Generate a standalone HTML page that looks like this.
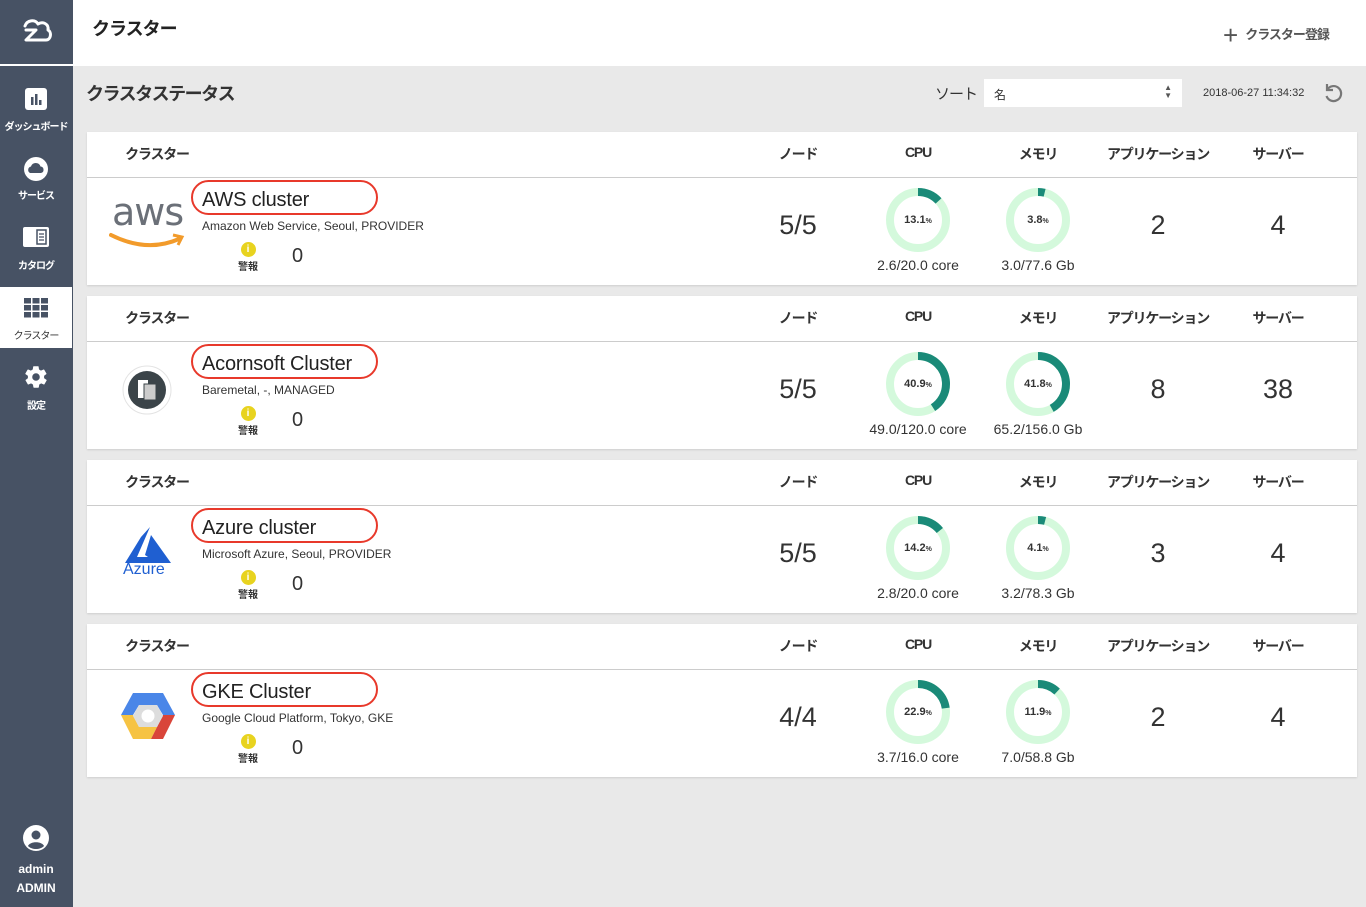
<!DOCTYPE html>
<html><head><meta charset="utf-8"><style>
*{margin:0;padding:0;box-sizing:border-box}
body{width:1366px;height:907px;background:#e9e9e9;font-family:"Liberation Sans","Noto Sans CJK JP",sans-serif;color:#333;position:relative;overflow:hidden}
.side{position:absolute;left:0;top:0;width:73px;height:907px;background:#475264;color:#fff}
.side .logo{height:66px;border-bottom:2px solid #fff;display:flex;align-items:center;justify-content:center}
.nav{position:absolute;left:0;width:72px;height:62px;text-align:center;font-size:10px;font-weight:bold;color:#fff;letter-spacing:-1px}
.nav svg{display:block;margin:0 auto}
.nav.act{background:#fff;color:#333;font-weight:normal}
.top{position:absolute;left:73px;top:0;right:0;height:66px;background:#fff}
.abs{position:absolute;white-space:nowrap}
.card{position:absolute;left:87px;width:1270px;height:153px;background:#fff;box-shadow:0 1px 2px rgba(0,0,0,.12)}
.card .hl{position:absolute;left:0;right:0;top:45px;border-top:1px solid #ccc}
.h{position:absolute;top:12px;font-size:14px;font-weight:bold;transform:translateX(-50%);letter-spacing:-1.2px;white-space:nowrap}
.big{position:absolute;top:78px;font-size:27px;transform:translateX(-50%);color:#333}
.name{position:absolute;left:104px;top:48px;width:187px;height:35px;border:2.5px solid #e8392b;border-radius:18px}
.name span{position:absolute;left:9px;top:7px;font-size:20px;color:#222;white-space:nowrap;letter-spacing:-0.2px}
.sub{position:absolute;left:115px;top:87px;font-size:12px;color:#333}
.warn{position:absolute;left:150px;top:110px;width:22px;text-align:center;font-size:10px;font-weight:bold}
.warn i{display:block;width:15px;height:15px;border-radius:50%;background:#e8d31f;margin:0 auto 1px;color:#fff;font-style:normal;font-size:10px;line-height:15px}
.zero{position:absolute;left:205px;top:113px;font-size:20px}
.donut{position:absolute;top:55px;width:66px;height:66px;transform:translateX(-50%)}
.dl{position:absolute;top:125px;font-size:14px;transform:translateX(-50%);white-space:nowrap}
.pct{position:absolute;left:0;top:27px;width:66px;text-align:center;font-size:11px;font-weight:bold}
.pct small{font-size:7px}
</style></head><body>
<div class="side">
 <div class="logo"><svg width="32" height="28" viewBox="0 0 32 28" fill="none" stroke="#fff" stroke-width="3" stroke-linecap="round" stroke-linejoin="round"><path d="M4 8 C6 2 14 1 17 6 C22 3 28 6 27 12 C31 14 30 22 25 22 L12 22"/><path d="M5 12 L15 12 L5 22 L12 22"/></svg></div>
 <div class="nav" style="top:87px"><svg width="24" height="24"><rect x="1" y="1" width="22" height="22" rx="3" fill="#fff"/><rect x="7" y="10" width="2.5" height="8" fill="#475264"/><rect x="11" y="7" width="2.5" height="11" fill="#475264"/><rect x="15" y="13" width="2.5" height="5" fill="#475264"/></svg><div style="margin-top:7px">ダッシュボード</div></div>
 <div class="nav" style="top:156px"><svg width="26" height="26"><circle cx="13" cy="13" r="12" fill="#fff"/><path d="M7 17 a3.5 3.5 0 0 1 1-6.5 a5 5 0 0 1 9.5 0 a3.3 3.3 0 0 1 0.5 6.5z" fill="#475264"/></svg><div style="margin-top:5px">サービス</div></div>
 <div class="nav" style="top:226px"><svg width="28" height="22"><rect x="1" y="1" width="26" height="20" rx="2" fill="#fff"/><rect x="15" y="4" width="9" height="14" fill="none" stroke="#475264" stroke-width="1.5"/><path d="M17 8h5M17 11h5M17 14h5" stroke="#475264" stroke-width="1.3"/></svg><div style="margin-top:9px">カタログ</div></div>
 <div class="nav act" style="top:287px;height:61px"><svg width="24" height="20" style="margin-top:11px"><g fill="#475264"><rect x="0" y="0" width="7" height="5.5"/><rect x="8.5" y="0" width="7" height="5.5"/><rect x="17" y="0" width="7" height="5.5"/><rect x="0" y="7" width="7" height="5.5"/><rect x="8.5" y="7" width="7" height="5.5"/><rect x="17" y="7" width="7" height="5.5"/><rect x="0" y="14" width="7" height="5.5"/><rect x="8.5" y="14" width="7" height="5.5"/><rect x="17" y="14" width="7" height="5.5"/></g></svg><div style="margin-top:9px">クラスター</div></div>
 <div class="nav" style="top:364px"><svg width="26" height="26" viewBox="0 0 24 24"><path fill="#fff" d="M19.4 13c.04-.3.1-.7.1-1s-.03-.7-.1-1l2.1-1.6c.2-.15.25-.4.1-.6l-2-3.5c-.1-.2-.4-.3-.6-.2l-2.5 1c-.5-.4-1.1-.7-1.7-1l-.4-2.6c0-.2-.2-.4-.5-.4h-4c-.25 0-.45.2-.5.4l-.4 2.6c-.6.25-1.2.6-1.7 1l-2.5-1c-.2-.1-.5 0-.6.2l-2 3.5c-.1.2-.06.5.1.6L4.6 11c-.05.3-.1.7-.1 1s.03.7.1 1l-2.1 1.6c-.2.15-.25.4-.1.6l2 3.5c.1.2.4.3.6.2l2.5-1c.5.4 1.1.7 1.7 1l.4 2.6c.05.2.25.4.5.4h4c.25 0 .45-.2.5-.4l.4-2.6c.6-.25 1.2-.6 1.7-1l2.5 1c.2.1.5 0 .6-.2l2-3.5c.1-.2.06-.45-.1-.6L19.4 13zM12 15.5a3.5 3.5 0 1 1 0-7 3.5 3.5 0 0 1 0 7z"/></svg><div style="margin-top:7px">設定</div></div>
 <div class="nav" style="top:825px;height:80px;font-size:12px;letter-spacing:0"><svg width="26" height="26"><circle cx="13" cy="13" r="13" fill="#fff"/><circle cx="13" cy="10" r="4.5" fill="#475264"/><path d="M5 21 c2-5 14-5 16 0 c-4 4-12 4-16 0z" fill="#475264"/></svg><div style="margin-top:11px">admin</div><div style="margin-top:5px">ADMIN</div></div>
</div>
<div class="top">
 <div class="abs" style="left:19px;top:15px;font-size:18px;font-weight:bold;color:#222;letter-spacing:-1px">クラスター</div>
 <div class="abs" style="left:1150px;top:20px;font-size:13px;font-weight:bold;color:#555;letter-spacing:-1px"><span style="font-size:26px;font-weight:normal;vertical-align:-5px;margin-right:8px">+</span>クラスター登録</div>
</div>
<div class="abs" style="left:86px;top:80px;font-size:18px;font-weight:bold;color:#333;letter-spacing:-1.5px">クラスタステータス</div>
<div class="abs" style="left:935px;top:83px;font-size:15px;letter-spacing:-1px">ソート</div>
<div class="abs" style="left:984px;top:79px;width:198px;height:28px;background:#fff;font-size:12px;padding:7px 10px">名<span style="position:absolute;right:10px;top:5px;font-size:8px;line-height:8px;color:#555">▲<br>▼</span></div>
<div class="abs" style="left:1203px;top:87px;font-size:11px">2018-06-27 11:34:32</div>
<svg class="abs" style="left:1322px;top:82px" width="22" height="22" viewBox="0 0 22 22" fill="none" stroke="#777" stroke-width="2.2"><path d="M5 8 A7.5 7.5 0 1 1 4.5 14"/><path d="M5 2 L5 8 L11 8" fill="none"/></svg>

<div class="card" style="top:132px">
 <div class="h" style="left:70px">クラスター</div><div class="h" style="left:711px">ノード</div><div class="h" style="left:831px">CPU</div><div class="h" style="left:951px">メモリ</div><div class="h" style="left:1071px">アプリケーション</div><div class="h" style="left:1191px">サーバー</div>
 <div class="hl"></div>
 <div class="abs" style="left:25px;top:58px;font-size:38px;color:#6b7078;font-family:'DejaVu Sans',sans-serif;letter-spacing:-1px">aws</div>
 <svg class="abs" style="left:22px;top:99px" width="78" height="20"><path d="M2 4 Q38 22 70 8" stroke="#f29b2b" stroke-width="4" fill="none" stroke-linecap="round"/><path d="M64 4 L73 6 L69 14" stroke="#f29b2b" stroke-width="3" fill="none"/></svg>
 <div class="name"><span>AWS cluster</span></div><div class="sub">Amazon Web Service, Seoul, PROVIDER</div>
 <div class="warn"><i>i</i>警報</div><div class="zero">0</div>
 <div class="big" style="left:711px">5/5</div>
 <div class="donut" style="left:831px"><svg width="66" height="66"><circle cx="33" cy="33" r="28" fill="none" stroke="#d4f9dc" stroke-width="8"/><circle cx="33" cy="33" r="28" fill="none" stroke="#1a8a78" stroke-width="8" stroke-dasharray="23 200" transform="rotate(-90 33 33)"/></svg><div class="pct">13.1<small>%</small></div></div>
 <div class="dl" style="left:831px">2.6/20.0 core</div>
 <div class="donut" style="left:951px"><svg width="66" height="66"><circle cx="33" cy="33" r="28" fill="none" stroke="#d4f9dc" stroke-width="8"/><circle cx="33" cy="33" r="28" fill="none" stroke="#1a8a78" stroke-width="8" stroke-dasharray="6.7 200" transform="rotate(-90 33 33)"/></svg><div class="pct">3.8<small>%</small></div></div>
 <div class="dl" style="left:951px">3.0/77.6 Gb</div>
 <div class="big" style="left:1071px">2</div><div class="big" style="left:1191px">4</div>
</div>

<div class="card" style="top:296px">
 <div class="h" style="left:70px">クラスター</div><div class="h" style="left:711px">ノード</div><div class="h" style="left:831px">CPU</div><div class="h" style="left:951px">メモリ</div><div class="h" style="left:1071px">アプリケーション</div><div class="h" style="left:1191px">サーバー</div>
 <div class="hl"></div>
 <svg class="abs" style="left:35px;top:69px" width="50" height="50"><circle cx="25" cy="25" r="24" fill="#fff" stroke="#e3e3e3"/><circle cx="25" cy="25" r="19" fill="#3b4449"/><rect x="16" y="15" width="10" height="18" fill="#fff"/><rect x="22" y="19" width="12" height="16" fill="#ccc" stroke="#3b4449"/></svg>
 <div class="name"><span>Acornsoft Cluster</span></div><div class="sub">Baremetal, -, MANAGED</div>
 <div class="warn"><i>i</i>警報</div><div class="zero">0</div>
 <div class="big" style="left:711px">5/5</div>
 <div class="donut" style="left:831px"><svg width="66" height="66"><circle cx="33" cy="33" r="28" fill="none" stroke="#d4f9dc" stroke-width="8"/><circle cx="33" cy="33" r="28" fill="none" stroke="#1a8a78" stroke-width="8" stroke-dasharray="72 200" transform="rotate(-90 33 33)"/></svg><div class="pct">40.9<small>%</small></div></div>
 <div class="dl" style="left:831px">49.0/120.0 core</div>
 <div class="donut" style="left:951px"><svg width="66" height="66"><circle cx="33" cy="33" r="28" fill="none" stroke="#d4f9dc" stroke-width="8"/><circle cx="33" cy="33" r="28" fill="none" stroke="#1a8a78" stroke-width="8" stroke-dasharray="73.5 200" transform="rotate(-90 33 33)"/></svg><div class="pct">41.8<small>%</small></div></div>
 <div class="dl" style="left:951px">65.2/156.0 Gb</div>
 <div class="big" style="left:1071px">8</div><div class="big" style="left:1191px">38</div>
</div>

<div class="card" style="top:460px">
 <div class="h" style="left:70px">クラスター</div><div class="h" style="left:711px">ノード</div><div class="h" style="left:831px">CPU</div><div class="h" style="left:951px">メモリ</div><div class="h" style="left:1071px">アプリケーション</div><div class="h" style="left:1191px">サーバー</div>
 <div class="hl"></div>
 <svg class="abs" style="left:36px;top:67px" width="50" height="38"><path d="M2 36 L18 10 L27 0 L14 30 L30 30 L38 36z" fill="#1f5fd1"/><path d="M28 8 L48 36 L34 36 L22 28z" fill="#1f5fd1"/></svg>
 <div class="abs" style="left:36px;top:101px;font-size:16px;color:#1f5fd1">Azure</div>
 <div class="name"><span>Azure cluster</span></div><div class="sub">Microsoft Azure, Seoul, PROVIDER</div>
 <div class="warn"><i>i</i>警報</div><div class="zero">0</div>
 <div class="big" style="left:711px">5/5</div>
 <div class="donut" style="left:831px"><svg width="66" height="66"><circle cx="33" cy="33" r="28" fill="none" stroke="#d4f9dc" stroke-width="8"/><circle cx="33" cy="33" r="28" fill="none" stroke="#1a8a78" stroke-width="8" stroke-dasharray="25 200" transform="rotate(-90 33 33)"/></svg><div class="pct">14.2<small>%</small></div></div>
 <div class="dl" style="left:831px">2.8/20.0 core</div>
 <div class="donut" style="left:951px"><svg width="66" height="66"><circle cx="33" cy="33" r="28" fill="none" stroke="#d4f9dc" stroke-width="8"/><circle cx="33" cy="33" r="28" fill="none" stroke="#1a8a78" stroke-width="8" stroke-dasharray="7.2 200" transform="rotate(-90 33 33)"/></svg><div class="pct">4.1<small>%</small></div></div>
 <div class="dl" style="left:951px">3.2/78.3 Gb</div>
 <div class="big" style="left:1071px">3</div><div class="big" style="left:1191px">4</div>
</div>

<div class="card" style="top:624px">
 <div class="h" style="left:70px">クラスター</div><div class="h" style="left:711px">ノード</div><div class="h" style="left:831px">CPU</div><div class="h" style="left:951px">メモリ</div><div class="h" style="left:1071px">アプリケーション</div><div class="h" style="left:1191px">サーバー</div>
 <div class="hl"></div>
 <svg class="abs" style="left:32px;top:67px" width="58" height="52" viewBox="0 0 58 52"><path d="M14 2 L44 2 L56 24 L44 24 L38 14 L20 14 L14 24 L2 24z" fill="#4a86e8"/><path d="M2 24 L14 24 L20 36 L38 36 L32 48 L14 48z" fill="#f6c343"/><path d="M56 24 L44 48 L32 48 L38 36 L44 24z" fill="#d9453a"/><path d="M20 14 L38 14 L44 25 L38 36 L20 36 L14 25z" fill="#ddd"/><circle cx="29" cy="25" r="6.5" fill="#fff"/></svg>
 <div class="name"><span>GKE Cluster</span></div><div class="sub">Google Cloud Platform, Tokyo, GKE</div>
 <div class="warn"><i>i</i>警報</div><div class="zero">0</div>
 <div class="big" style="left:711px">4/4</div>
 <div class="donut" style="left:831px"><svg width="66" height="66"><circle cx="33" cy="33" r="28" fill="none" stroke="#d4f9dc" stroke-width="8"/><circle cx="33" cy="33" r="28" fill="none" stroke="#1a8a78" stroke-width="8" stroke-dasharray="40 200" transform="rotate(-90 33 33)"/></svg><div class="pct">22.9<small>%</small></div></div>
 <div class="dl" style="left:831px">3.7/16.0 core</div>
 <div class="donut" style="left:951px"><svg width="66" height="66"><circle cx="33" cy="33" r="28" fill="none" stroke="#d4f9dc" stroke-width="8"/><circle cx="33" cy="33" r="28" fill="none" stroke="#1a8a78" stroke-width="8" stroke-dasharray="21 200" transform="rotate(-90 33 33)"/></svg><div class="pct">11.9<small>%</small></div></div>
 <div class="dl" style="left:951px">7.0/58.8 Gb</div>
 <div class="big" style="left:1071px">2</div><div class="big" style="left:1191px">4</div>
</div>
</body></html>
